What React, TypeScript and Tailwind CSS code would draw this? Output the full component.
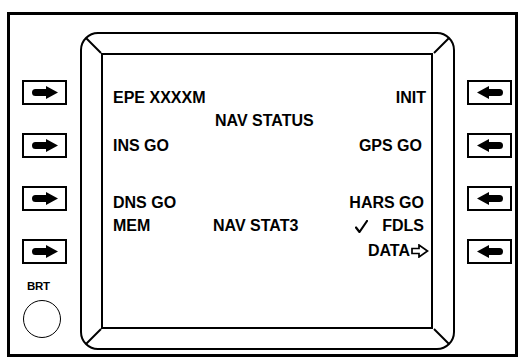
import React from "react";

const font = { fontFamily: '"Liberation Sans", Arial, sans-serif' };

function ArrowBtn({ dir }: { dir: "right" | "left" }) {
  return (
    <div className="w-[45px] h-[25px] border-[2.5px] border-black flex items-center justify-center">
      <svg width="26" height="13" viewBox="0 0 26 13" className={dir === "left" ? "-scale-x-100" : ""}>
        <path d="M3.5 3 H14 V0 L26 6.5 L14 13 V10 H3.5 A3.5 3.5 0 0 1 3.5 3 Z" fill="#000" />
      </svg>
    </div>
  );
}

function Check() {
  return (
    <svg width="13" height="13" viewBox="0 0 13 13" className="mr-[14px]">
      <path d="M1 7.5 L4.5 12 L12 1" fill="none" stroke="#000" strokeWidth="2.2" strokeLinecap="round" strokeLinejoin="round" />
    </svg>
  );
}

function HollowArrow() {
  return (
    <svg width="18" height="14" viewBox="0 0 18 14" className="ml-[1px]">
      <path d="M1 4.5 H8 V1 L16.5 7 L8 13 V9.5 H1 Z" fill="#fff" stroke="#000" strokeWidth="1.7" strokeLinejoin="miter" />
    </svg>
  );
}

export default function App() {
  return (
    <div className="w-[524px] h-[359px] bg-white pt-[12px] pl-[7px]" style={font}>
      <div className="w-[511px] h-[345px] border-[3px] border-black flex">
        {/* left column */}
        <div className="w-[70px] flex flex-col pl-[12px] pt-[65px]">
          <div className="flex flex-col gap-[28px]">
            <ArrowBtn dir="right" />
            <ArrowBtn dir="right" />
            <ArrowBtn dir="right" />
            <ArrowBtn dir="right" />
          </div>
          <div className="mt-[17px] pl-[5px] text-[11.5px] leading-[11.5px] font-bold text-black tracking-[-0.3px]">BRT</div>
          <div className="mt-[7px] pl-[1px]">
            <div className="w-[38px] h-[38px] rounded-full border-[1.5px] border-black" />
          </div>
        </div>

        {/* bezel */}
        <div className="mt-[17px] w-[375px] h-[318px] border-2 border-black rounded-[18px] relative pl-[19px] pr-[20px] pt-[19px] pb-[19px]">
          <svg className="absolute -left-[2px] -top-[2px]" width="375" height="318" viewBox="0 0 375 318">
            <line x1="6" y1="6" x2="21" y2="21" stroke="#000" strokeWidth="2" />
            <line x1="369" y1="6" x2="354" y2="21" stroke="#000" strokeWidth="2" />
            <line x1="6" y1="312" x2="21" y2="297" stroke="#000" strokeWidth="2" />
            <line x1="369" y1="312" x2="354" y2="297" stroke="#000" strokeWidth="2" />
          </svg>
          <div className="w-[332px] h-[276px] border-2 border-black bg-white relative text-[16px] leading-[16px] font-bold text-black pl-[10px] pr-[5px] pt-[35px]">
            <div className="flex justify-between">
              <span>EPE XXXXM</span>
              <span>INIT</span>
            </div>
            <div className="mt-[7px] pl-[102px]">NAV STATUS</div>
            <div className="mt-[9px] flex justify-between">
              <span>INS GO</span>
              <span className="pr-[4px]">GPS GO</span>
            </div>
            <div className="mt-[41px] flex justify-between">
              <span>DNS GO</span>
              <span className="pr-[2px]">HARS GO</span>
            </div>
            <div className="mt-[7px] flex items-center">
              <span className="w-[100px]">MEM</span>
              <span>NAV STAT3</span>
              <span className="ml-auto flex items-center pr-[2px]">
                <Check />
                FDLS
              </span>
            </div>
            <div className="mt-[9px] flex justify-end items-center -mr-[3px]">
              <span>DATA</span>
              <HollowArrow />
            </div>
          </div>
        </div>

        {/* right column */}
        <div className="w-[60px] flex flex-col pl-[12px] pt-[65px]">
          <div className="flex flex-col gap-[28px]">
            <ArrowBtn dir="left" />
            <ArrowBtn dir="left" />
            <ArrowBtn dir="left" />
            <ArrowBtn dir="left" />
          </div>
        </div>
      </div>
    </div>
  );
}
